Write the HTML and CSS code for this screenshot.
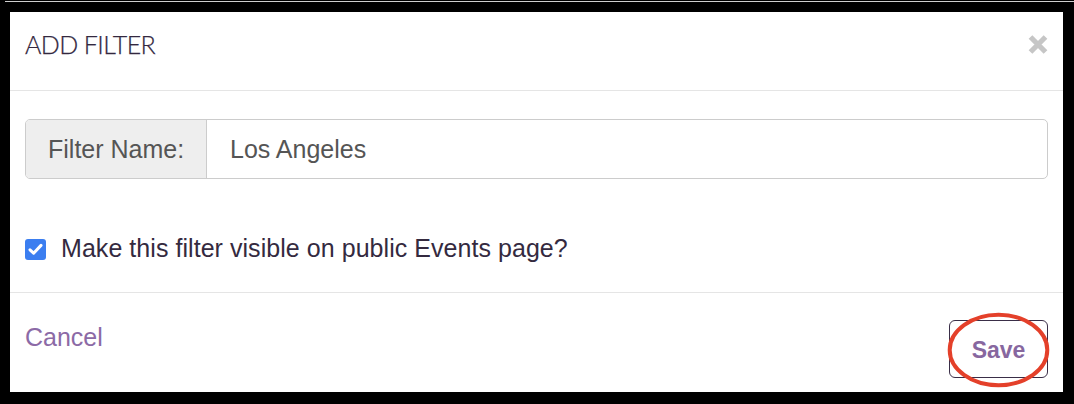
FILE: index.html
```html
<!DOCTYPE html>
<html>
<head>
<meta charset="utf-8">
<link rel="stylesheet" href="styles.css">
</head>
<body>
<div class="topline"></div>
<div class="modal">
  <div class="modal-header">
    <h4 class="title">ADD FILTER</h4>
    <span class="close" aria-label="Close">
      <svg width="20" height="19" viewBox="0 0 20 19"><path d="M2.5 2 L17.5 17 M17.5 2 L2.5 17" stroke="#c6c6c6" stroke-width="5.2" stroke-linecap="butt"/></svg>
    </span>
  </div>
  <div class="modal-body">
    <div class="input-group">
      <span class="addon">Filter Name:</span>
      <span class="field">Los Angeles</span>
    </div>
    <label class="check">
      <span class="box">
        <svg width="15" height="13" viewBox="0 0 15 13"><path d="M2 6.8 L5.6 10.2 L13 2.4" fill="none" stroke="#fff" stroke-width="3" stroke-linecap="round" stroke-linejoin="round"/></svg>
      </span>
      <span class="check-text">Make this filter visible on public Events page?</span>
    </label>
  </div>
  <div class="modal-footer">
    <a class="cancel">Cancel</a>
    <div class="save-wrap">
      <button class="save">Save</button>
      <svg class="ring" width="103" height="76" viewBox="0 0 103 76"><ellipse cx="51.5" cy="38" rx="48.8" ry="35.2" fill="none" stroke="#e4402a" stroke-width="4"/></svg>
    </div>
  </div>
</div>
</body>
</html>
```

FILE: styles.css
```css
html, body {
  margin: 0;
  padding: 0;
  background: #000;
}
body {
  width: 1074px;
  height: 404px;
  overflow: hidden;
  font-family: "Liberation Sans", Arial, sans-serif;
}
.topline {
  height: 1px;
  margin-top: 1px;
  margin-left: 5px;
  background: #cfcfcf;
}
.modal {
  margin: 10px 0 0 10px;
  width: 1053px;
  height: 380px;
  background: #fff;
  display: flex;
  flex-direction: column;
}
.modal-header {
  height: 78px;
  border-bottom: 1px solid #e5e5e5;
  display: flex;
  justify-content: space-between;
  align-items: flex-start;
  padding: 0 15px;
  box-sizing: content-box;
}
.title {
  margin: 17px 0 0 0;
  font-family: "Lato", sans-serif;
  font-weight: 300;
  font-size: 25px;
  line-height: 30px;
  color: #33283f;
  letter-spacing: -0.6px;
  -webkit-text-stroke: 0.25px #33283f;
}
.close {
  margin-top: 23px;
  display: flex;
}
.modal-body {
  padding: 28px 15px 0;
  height: 173px;
  border-bottom: 1px solid #e5e5e5;
}
.input-group {
  display: flex;
  height: 60px;
  box-sizing: border-box;
  border: 1px solid #ccc;
  border-radius: 5px;
  font-size: 25px;
  color: #555;
}
.addon {
  width: 158px;
  padding-left: 22px;
  background: #eee;
  border-right: 1px solid #ccc;
  border-radius: 4px 0 0 4px;
  display: flex;
  align-items: center;
}
.field {
  flex: 1;
  padding-left: 23px;
  display: flex;
  align-items: center;
}
.check {
  margin-top: 57px;
  display: flex;
  align-items: center;
  gap: 15px;
}
.box {
  width: 21px;
  height: 21px;
  border-radius: 3px;
  background: #3b7ef0;
  display: flex;
  align-items: center;
  justify-content: center;
}
.check-text {
  font-size: 25px;
  line-height: 30px;
  color: #342a3f;
  margin-top: -3px;
  letter-spacing: 0.05px;
}
.modal-footer {
  flex: 1;
  display: flex;
  justify-content: space-between;
  align-items: flex-start;
  padding: 27px 15px 0;
}
.cancel {
  margin-top: 2px;
  font-size: 25px;
  line-height: 30px;
  color: #8c6aa6;
}
.save-wrap {
  position: relative;
}
.save {
  width: 99px;
  height: 58px;
  background: #fff;
  border: 1px solid #3a2e47;
  border-radius: 6px;
  font-family: "Liberation Sans", Arial, sans-serif;
  font-weight: bold;
  font-size: 23px;
  color: #87679f;
  padding: 0;
  padding-top: 2px;
  display: block;
}
.ring {
  position: absolute;
  left: -2px;
  top: -8px;
}
```
